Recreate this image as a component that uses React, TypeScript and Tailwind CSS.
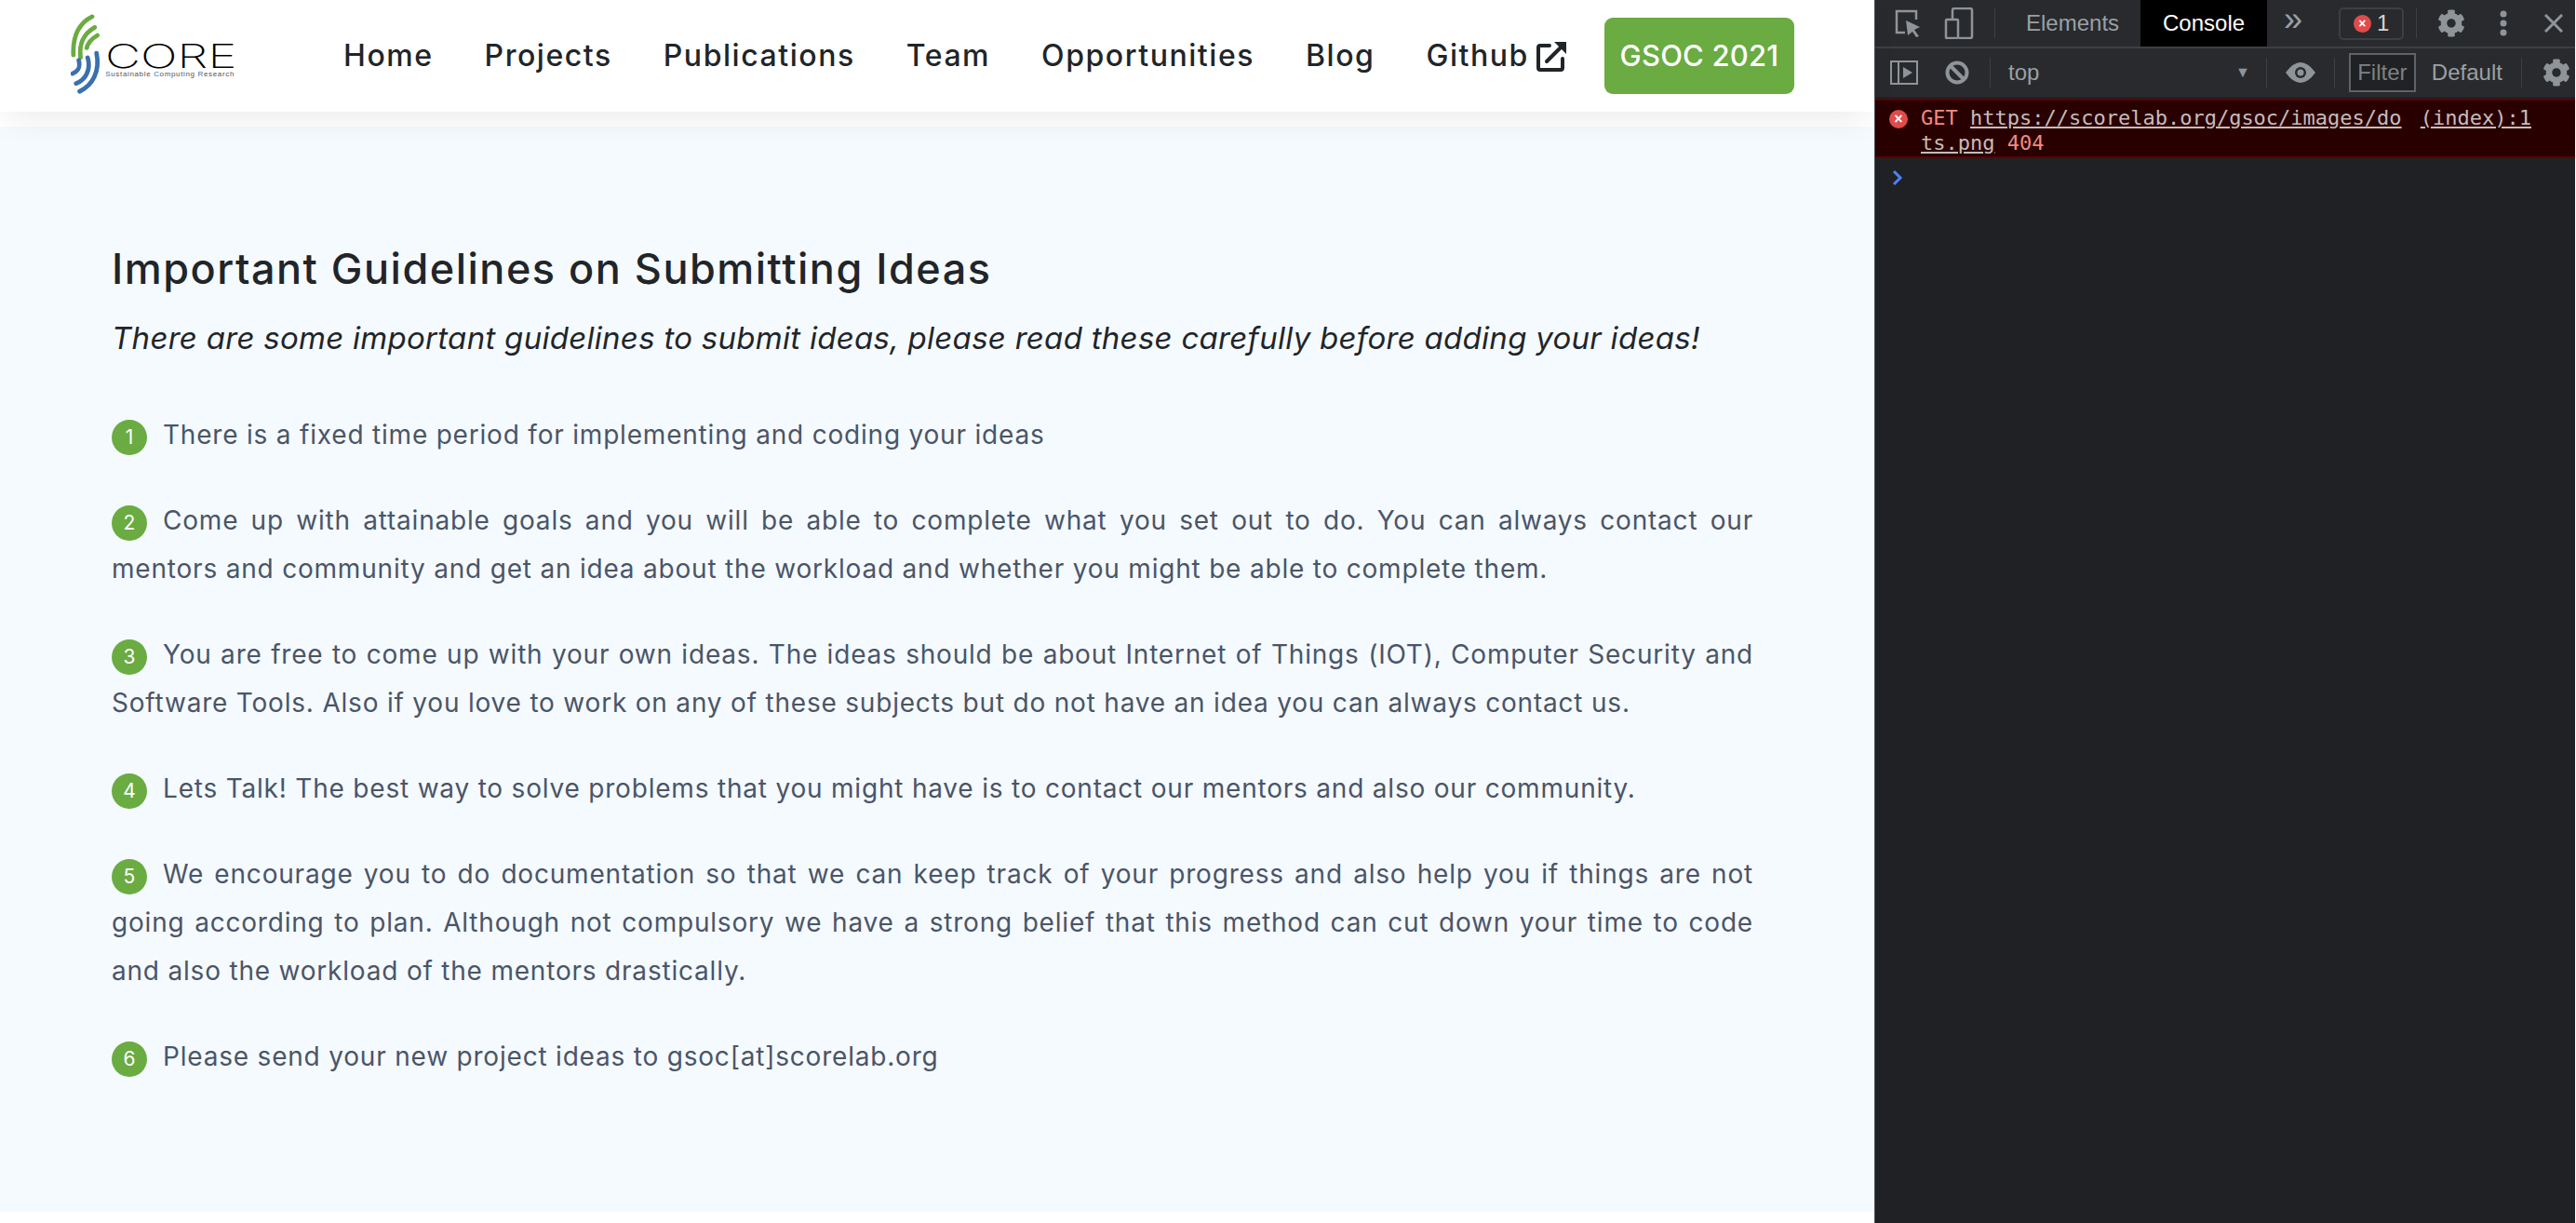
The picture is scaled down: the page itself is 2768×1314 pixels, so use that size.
import { FaCog } from 'react-icons/fa';

const guidelines = [
  'There is a fixed time period for implementing and coding your ideas',
  'Come up with attainable goals and you will be able to complete what you set out to do. You can always contact our mentors and community and get an idea about the workload and whether you might be able to complete them.',
  'You are free to come up with your own ideas. The ideas should be about Internet of Things (IOT), Computer Security and Software Tools. Also if you love to work on any of these subjects but do not have an idea you can always contact us.',
  'Lets Talk! The best way to solve problems that you might have is to contact our mentors and also our community.',
  'We encourage you to do documentation so that we can keep track of your progress and also help you if things are not going according to plan. Although not compulsory we have a strong belief that this method can cut down your time to code and also the workload of the mentors drastically.',
  'Please send your new project ideas to gsoc[at]scorelab.org',
];

const links = ['Home', 'Projects', 'Publications', 'Team', 'Opportunities', 'Blog'];

function Logo() {
  return (
    <div className="flex items-center w-[176px] h-[90px] shrink-0">
      <svg width="40" height="90" viewBox="0 0 40 90" fill="none" strokeLinecap="round" strokeWidth="5">
        <g stroke="#6aab42">
          <path d="M24 1 C10 8 2 22 3 44" />
          <path d="M27 13 C15 20 9 30 11 47" />
          <path d="M30 22 C23 26 19 32 18 36" />
        </g>
        <g stroke="#3a70ae">
          <path d="M9 50 C11 58 9 62 2 65" />
          <path d="M19 47 C23 60 17 72 6 76" />
          <path d="M29 42 C33 62 25 78 10 85" />
        </g>
      </svg>
      <div className="ml-[-1px] mt-[8px] font-['Liberation_Sans',sans-serif]">
        <div className="text-[35px] leading-[30px] font-['Inter',sans-serif] font-extralight scale-x-[1.5] origin-left text-black">CORE</div>
        <div className="text-[8px] leading-[9px] tracking-[0.65px] text-[#555] whitespace-nowrap">
          <span className="text-[#3a70ae]">S</span>ustainable <span className="text-[#3a70ae]">C</span>omputing <span className="text-[#3a70ae]">R</span>esearch
        </div>
      </div>
    </div>
  );
}

function ExternalIcon() {
  return (
    <svg width="34" height="34" viewBox="0 0 34 34" fill="none" stroke="#212529" strokeWidth="4" strokeLinecap="round">
      <path d="M14 6 H4 Q2 6 2 8 V30 Q2 32 4 32 H26 Q28 32 28 30 V20" />
      <path d="M11 23 L29 5" />
      <path d="M19 2 H32 V15 Z" fill="#212529" stroke="none" />
    </svg>
  );
}

function Badge({ n }: { n: number }) {
  return (
    <span className="inline-flex items-center justify-center w-[38px] h-[38px] rounded-full bg-[#6aab42] text-white text-[21px] tracking-normal mr-[17px]">
      {n}
    </span>
  );
}

function DevTools() {
  return (
    <aside className="w-[753px] shrink-0 h-[1314px] bg-[#202124] border-l border-[#494c50] font-['Liberation_Sans',sans-serif] text-[#9aa0a6] overflow-hidden">
      <div className="h-[52px] bg-[#292a2d] border-b-2 border-[#3c3f43] flex items-center">
        <svg className="ml-[20px]" width="30" height="32" viewBox="0 0 30 32" fill="none" stroke="#8f9499" strokeWidth="2.5">
          <path d="M12 26 H3 V3 H24 V12" />
          <path d="M13 13 L28 20 L22 23 L27 30 L24 31 L20 25 L15 29 Z" fill="#8f9499" stroke="none" />
        </svg>
        <svg className="ml-[24px]" width="32" height="34" viewBox="0 0 32 34" fill="none" stroke="#8f9499" strokeWidth="2.5">
          <path d="M9 13 V3 Q9 1 11 1 H28 Q30 1 30 3 V31 Q30 33 28 33 H16" />
          <rect x="2" y="13" width="13" height="20" rx="1" />
        </svg>
        <div className="ml-[22px] w-px h-[32px] bg-[#3c3f43]" />
        <span className="ml-[33px] text-[24px] text-[#9aa0a6]">Elements</span>
        <span className="ml-[23px] w-[136px] h-[50px] bg-black text-white text-[24px] flex items-center justify-center">Console</span>
        <span className="ml-[18px] text-[36px] leading-none mt-[-8px]">»</span>
        <span className="ml-[39px] w-[70px] h-[35px] border-2 border-[#3c3f43] rounded-[5px] flex items-center justify-center gap-[6px] text-[24px] text-[#d5d5d5]">
          <span className="w-[19px] h-[19px] rounded-full bg-[#e04b4b] text-white text-[14px] leading-[19px] text-center font-bold">×</span>
          1
        </span>
        <div className="ml-[13px] w-px h-[32px] bg-[#3c3f43]" />
        <FaCog className="ml-[22px] text-[#8f9499]" size={30} />
        <svg className="ml-[37px]" width="8" height="28" viewBox="0 0 8 28" fill="#8f9499">
          <circle cx="4" cy="4" r="3.5" />
          <circle cx="4" cy="14" r="3.5" />
          <circle cx="4" cy="24" r="3.5" />
        </svg>
        <svg className="ml-[40px]" width="20" height="20" viewBox="0 0 20 20" stroke="#8f9499" strokeWidth="3">
          <path d="M1 1 L19 19 M19 1 L1 19" />
        </svg>
      </div>
      <div className="h-[52px] bg-[#292a2d] flex items-center">
        <svg className="ml-[16px]" width="32" height="26" viewBox="0 0 32 26" fill="none" stroke="#8f9499" strokeWidth="2">
          <rect x="1" y="1" width="28" height="24" />
          <path d="M9 1 V25" />
          <path d="M14 7 L24 13 L14 19 Z" fill="#8f9499" stroke="none" />
        </svg>
        <svg className="ml-[27px]" width="26" height="26" viewBox="0 0 26 26" fill="none" stroke="#8f9499" strokeWidth="4">
          <circle cx="13" cy="13" r="10.5" />
          <path d="M6 6 L20 20" />
        </svg>
        <div className="ml-[22px] w-px h-[32px] bg-[#3c3f43]" />
        <span className="ml-[19px] w-[244px] text-[24px]">top</span>
        <span className="text-[16px] text-[#8f9499]">▼</span>
        <div className="ml-[17px] w-px h-[32px] bg-[#3c3f43]" />
        <svg className="ml-[20px]" width="32" height="22" viewBox="0 0 32 22">
          <path d="M0 11 Q16 -11 32 11 Q16 33 0 11 Z" fill="#8f9499" />
          <circle cx="16" cy="11" r="6" fill="#292a2d" />
          <circle cx="16" cy="11" r="3.5" fill="#8f9499" />
        </svg>
        <div className="ml-[20px] w-px h-[32px] bg-[#3c3f43]" />
        <span className="ml-[15px] w-[72px] h-[42px] border-2 border-[#5f6368] bg-[#202124] flex items-center justify-center text-[24px] text-[#7d8185]">Filter</span>
        <span className="ml-[17px] text-[24px]">Default</span>
        <div className="ml-[20px] w-px h-[32px] bg-[#3c3f43]" />
        <FaCog className="ml-[22px] text-[#8f9499]" size={30} />
      </div>
      <div className="h-[64px] mt-[2px] bg-[#290000] border-y-2 border-[#5c0000] relative font-['DejaVu_Sans_Mono',monospace] text-[22px] leading-[27px] pl-[49px] pt-[5px] text-[#f28b82]">
        <span className="absolute left-[15px] top-[10px] w-[20px] h-[20px] rounded-full bg-[#e04b4b] text-white text-[16px] leading-[19px] text-center font-bold font-['Liberation_Sans',sans-serif]">×</span>
        <div className="flex justify-between pr-[47px] whitespace-nowrap">
          <span>GET <span className="underline text-[#c6bcbc]">https://scorelab.org/gsoc/images/do</span></span>
          <span className="underline text-[#c6bcbc]">(index):1</span>
        </div>
        <div><span className="underline text-[#c6bcbc]">ts.png</span> 404</div>
      </div>
      <div className="pl-[18px] pt-[12px] text-[#4d82f0]">
        <svg width="12" height="18" viewBox="0 0 12 18" fill="none" stroke="#4d82f0" strokeWidth="3">
          <path d="M2 2 L9 9 L2 16" />
        </svg>
      </div>
    </aside>
  );
}

export default function App() {
  return (
    <div className="flex w-[2768px] h-[1314px] overflow-hidden bg-white font-['Inter',sans-serif]">
      <main className="w-[2014px] shrink-0 flex flex-col">
        <nav className="relative z-10 h-[120px] bg-white flex items-center pl-[76px] shadow-[0_16px_32px_-8px_rgba(0,0,0,0.08)]">
          <Logo />
          <div className="ml-[117px] flex items-center gap-[55px] text-[32px] font-medium tracking-[1.55px] text-[#212529]">
            {links.map((l) => (
              <a key={l}>{l}</a>
            ))}
            <a className="flex items-center gap-[8px]">Github <ExternalIcon /></a>
          </div>
          <a className="ml-[39px] w-[204px] h-[82px] rounded-[9px] bg-[#6aab42] text-white text-[31px] font-medium tracking-[0.2px] flex items-center justify-center">
            GSOC 2021
          </a>
        </nav>
        <div className="h-[16px] shrink-0" />
        <section className="h-[1166px] bg-[#f5faff] px-[120px] pt-[131px]">
          <h1 className="text-[45px] leading-[44px] font-medium tracking-[1.5px] text-[#212529]">Important Guidelines on Submitting Ideas</h1>
          <p className="mt-[30px] text-[33px] leading-[44px] italic tracking-[0.28px] text-[#212529] whitespace-nowrap">
            There are some important guidelines to submit ideas, please read these carefully before adding your ideas!
          </p>
          <div className="mt-[56px] w-[1764px] text-[28px] leading-[52px] tracking-[0.8px] text-[#4a5568] text-justify flex flex-col gap-[40px]">
            {guidelines.map((g, i) => (
              <p key={i}><Badge n={i + 1} />{g}</p>
            ))}
          </div>
        </section>
      </main>
      <DevTools />
    </div>
  );
}
